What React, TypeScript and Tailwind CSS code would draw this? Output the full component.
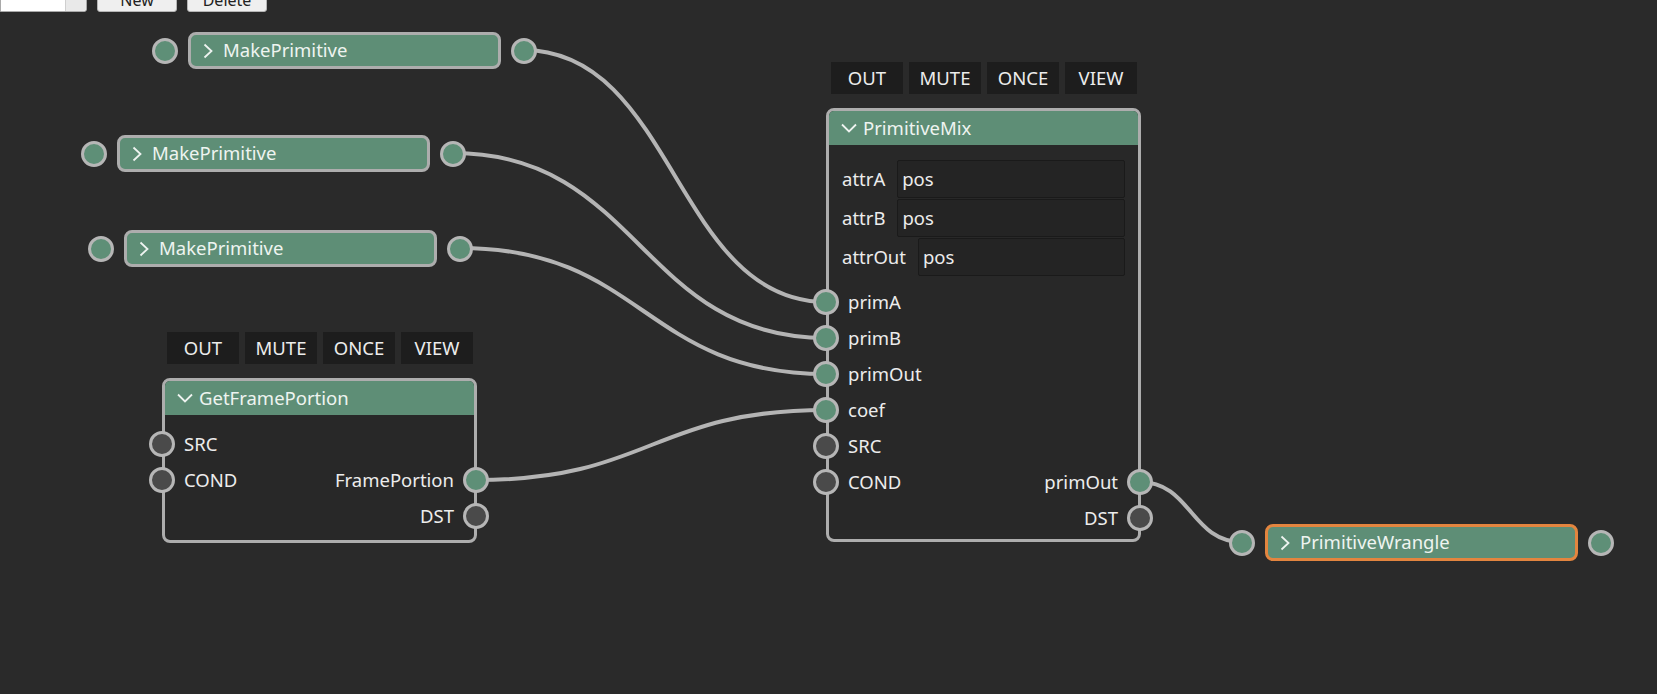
import React from "react"

const font = { fontFamily: '"Noto Sans", "Open Sans", sans-serif' }

type Wire = [number, number, number, number]

const wires: Wire[] = [
  [523, 50, 827, 302],
  [453, 153, 827, 338],
  [460, 248, 827, 374],
  [476, 480, 827, 410],
  [1140, 482, 1242, 542],
]

function wirePath([x1, y1, x2, y2]: Wire) {
  const d = (x2 - x1) / 2
  return `M ${x1} ${y1} C ${x1 + d} ${y1}, ${x2 - d} ${y2}, ${x2} ${y2}`
}

function Socket({ on = true }: { on?: boolean }) {
  return (
    <div
      className={`w-[26px] h-[26px] rounded-full border-[3px] border-[#b6b6b6] shrink-0 ${
        on ? "bg-[#5e8f77]" : "bg-[#4a4a4a]"
      }`}
    />
  )
}

function ChevronRight() {
  return (
    <svg width="10" height="16" viewBox="0 0 10 16" className="shrink-0">
      <path d="M1.5 1.5 L8.5 8 L1.5 14.5" fill="none" stroke="#eef3f0" strokeWidth="1.8" />
    </svg>
  )
}

function ChevronDown() {
  return (
    <svg width="16" height="10" viewBox="0 0 16 10" className="shrink-0">
      <path d="M1 1.5 L8 8.5 L15 1.5" fill="none" stroke="#eef3f0" strokeWidth="1.8" />
    </svg>
  )
}

function CollapsedNode({ x, y, title, active }: { x: number; y: number; title: string; active?: boolean }) {
  return (
    <div className="absolute flex items-center gap-[10px]" style={{ left: x - 36, top: y }}>
      <Socket />
      <div
        className={`w-[313px] h-[37px] rounded-[8px] border-[3px] bg-[#5e8e76] flex items-center gap-[10px] pl-[12px] ${
          active ? "border-[#e3853f]" : "border-[#adadad]"
        }`}
      >
        <ChevronRight />
        <span className="text-[18.5px] text-[#eef4f0] leading-none">{title}</span>
      </div>
      <Socket />
    </div>
  )
}

function Toolbar() {
  return (
    <div className="flex gap-[6px] pl-[5px]">
      {["OUT", "MUTE", "ONCE", "VIEW"].map((b) => (
        <div
          key={b}
          className="w-[72px] h-[32px] bg-[#1d1d1d] text-[#ececec] text-[18.5px] flex items-center justify-center"
        >
          {b}
        </div>
      ))}
    </div>
  )
}

type Port = { name: string; on?: boolean }

function PortRow({ left, right }: { left?: Port; right?: Port }) {
  return (
    <div className="relative h-[36px] flex items-center justify-between text-[18.5px] text-[#ececec]">
      {left ? (
        <>
          <div className="absolute left-[-16px] top-[5px]">
            <Socket on={left.on} />
          </div>
          <span className="pl-[19px]">{left.name}</span>
        </>
      ) : (
        <span />
      )}
      {right && (
        <>
          <span className="pr-[20px]">{right.name}</span>
          <div className="absolute right-[-15px] top-[5px]">
            <Socket on={right.on} />
          </div>
        </>
      )}
    </div>
  )
}

function AttrRow({ label, value }: { label: string; value: string }) {
  return (
    <div className="flex items-center gap-[12px] h-[38px] pl-[13px] pr-[13px]">
      <span className="text-[18.5px] text-[#ececec]">{label}</span>
      <div className="flex-1 h-[38px] bg-[#242424] border border-[#1a1a1a] rounded-[2px] flex items-center pl-[4px] text-[18.5px] text-[#ececec]">
        {value}
      </div>
    </div>
  )
}

function ExpandedNode({
  x,
  y,
  title,
  children,
}: {
  x: number
  y: number
  title: string
  children: React.ReactNode
}) {
  return (
    <div className="absolute flex flex-col" style={{ left: x, top: y }}>
      <Toolbar />
      <div className="mt-[14px] w-[315px] rounded-[8px] border-[3px] border-[#adadad] bg-[#282828]">
        <div className="h-[34px] bg-[#5e8e76] rounded-t-[5px] flex items-center gap-[6px] pl-[12px]">
          <ChevronDown />
          <span className="text-[18.5px] text-[#eef4f0] leading-none">{title}</span>
        </div>
        {children}
      </div>
    </div>
  )
}

export default function App() {
  return (
    <div className="relative w-[1657px] h-[694px] bg-[#2a2a2a] overflow-hidden" style={font}>
      <div className="flex items-start gap-[10px] -mt-[12px]">
        <div className="flex h-[24px] border border-[#a9a9a9] rounded-br-[3px] bg-white">
          <div className="w-[64px] bg-white" />
          <div className="w-[21px] bg-[#e9e9e9] border-l border-[#cfcfcf] rounded-br-[3px]" />
        </div>
        <div className="w-[80px] h-[24px] bg-[#efefef] border border-[#b5b5b5] rounded-[3px] text-[16px] text-[#222] flex items-center justify-center">
          New
        </div>
        <div className="w-[80px] h-[24px] bg-[#efefef] border border-[#b5b5b5] rounded-[3px] text-[16px] text-[#222] flex items-center justify-center">
          Delete
        </div>
      </div>

      <svg className="absolute inset-0" width="1657" height="694">
        {wires.map((w, i) => (
          <path key={i} d={wirePath(w)} fill="none" stroke="#b4b4b4" strokeWidth="4" />
        ))}
      </svg>

      <CollapsedNode x={188} y={32} title="MakePrimitive" />
      <CollapsedNode x={117} y={135} title="MakePrimitive" />
      <CollapsedNode x={124} y={230} title="MakePrimitive" />
      <CollapsedNode x={1265} y={524} title="PrimitiveWrangle" active />

      <ExpandedNode x={162} y={332} title="GetFramePortion">
        <div className="pt-[11px] pb-[6px]">
          <PortRow left={{ name: "SRC", on: false }} />
          <PortRow left={{ name: "COND", on: false }} right={{ name: "FramePortion" }} />
          <PortRow right={{ name: "DST", on: false }} />
        </div>
      </ExpandedNode>

      <ExpandedNode x={826} y={62} title="PrimitiveMix">
        <div className="pt-[15px] flex flex-col gap-[1px]">
          <AttrRow label="attrA" value="pos" />
          <AttrRow label="attrB" value="pos" />
          <AttrRow label="attrOut" value="pos" />
        </div>
        <div className="pt-[8px] pb-[3px]">
          <PortRow left={{ name: "primA" }} />
          <PortRow left={{ name: "primB" }} />
          <PortRow left={{ name: "primOut" }} />
          <PortRow left={{ name: "coef" }} />
          <PortRow left={{ name: "SRC", on: false }} />
          <PortRow left={{ name: "COND", on: false }} right={{ name: "primOut" }} />
          <PortRow right={{ name: "DST", on: false }} />
        </div>
      </ExpandedNode>
    </div>
  )
}
